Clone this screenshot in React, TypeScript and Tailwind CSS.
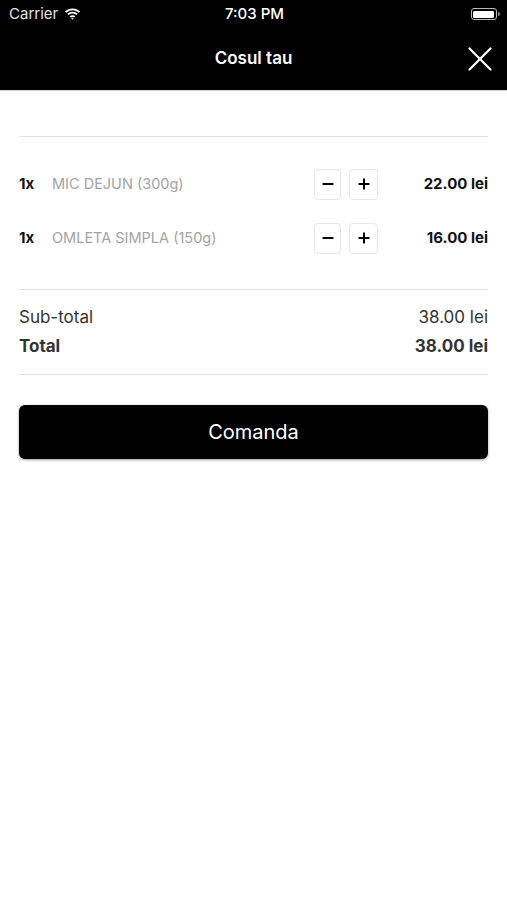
import { Minus, Plus } from "lucide-react"

const items = [
  { id: 1, qty: 1, name: "MIC DEJUN (300g)", price: "22.00 lei" },
  { id: 2, qty: 1, name: "OMLETA SIMPLA (150g)", price: "16.00 lei" },
]

const Wifi = () => (
  <svg width="17" height="12" viewBox="0 0 17 12" fill="white">
    <path d="M8.5 2.2c2.4 0 4.6.9 6.3 2.5l1.3-1.3C14.1 1.5 11.4.4 8.5.4S2.9 1.5.9 3.4l1.3 1.3C3.9 3.1 6.1 2.2 8.5 2.2z" />
    <path d="M8.5 5.6c1.5 0 2.9.6 3.9 1.5l1.3-1.3C12.3 4.5 10.5 3.8 8.5 3.8S4.7 4.5 3.3 5.8l1.3 1.3c1-.9 2.4-1.5 3.9-1.5z" />
    <path d="M8.5 9c.6 0 1.2.2 1.6.6l1.3-1.3C10.6 7.6 9.6 7.2 8.5 7.2s-2.1.4-2.9 1.1l1.3 1.3c.4-.4 1-.6 1.6-.6z" />
    <path d="M8.5 11.8l1.3-1.3c-.4-.3-.8-.5-1.3-.5s-.9.2-1.3.5z" />
  </svg>
)

const Close = () => (
  <svg width="24" height="24" viewBox="0 0 24 24" stroke="white" strokeWidth="2.2" strokeLinecap="round">
    <path d="M1.5 1.5l21 21M22.5 1.5l-21 21" />
  </svg>
)

export default function App() {
  return (
    <div className="min-h-screen bg-white font-['Inter','Liberation_Sans',sans-serif]">
      <header className="bg-black text-white h-[91px] border-b border-[#d0d0d0] flex flex-col">
        <div className="h-[28px] flex items-center justify-between pl-[9px] pr-[7px]">
          <div className="flex items-center gap-[6px] text-[15px] w-[120px] text-[#e5e5e5]">
            <span>Carrier</span>
            <Wifi />
          </div>
          <div className="text-[15px] font-medium">7:03 PM</div>
          <div className="w-[120px] flex justify-end items-center">
            <div className="w-[26px] h-[12px] rounded-[3px] border border-[#bbb] p-[1.5px]">
              <div className="w-full h-full bg-white rounded-[1.5px]" />
            </div>
            <div className="w-[2px] h-[4px] bg-[#888] rounded-r-sm ml-[1px]" />
          </div>
        </div>
        <div className="flex-1 flex items-center justify-center relative">
          <span className="text-[17px] font-semibold">Cosul tau</span>
          <div className="absolute right-[15px] top-[19px]">
            <Close />
          </div>
        </div>
      </header>

      <main className="px-[19px]">
        <div className="mt-[45px] border-t border-[#e2e2e2]" />
        <div className="pt-[31px] pb-[35px] flex flex-col gap-[22px]">
          {items.map((item) => (
            <div key={item.id} className="flex items-center h-[32px]">
              <span className="font-bold w-[33px] text-[15px] text-[#111]">{item.qty}x</span>
              <span className="flex-1 text-[14.5px] text-[#a3a3a3]">{item.name}</span>
              <button className="w-[27px] h-[31px] rounded-[4px] border border-[#e6e6e6] flex items-center justify-center">
                <Minus size={16} strokeWidth={3} />
              </button>
              <button className="ml-[8px] w-[29px] h-[31px] rounded-[4px] border border-[#e6e6e6] flex items-center justify-center">
                <Plus size={16} strokeWidth={3} />
              </button>
              <span className="w-[110px] text-right font-bold text-[15px] text-[#111]">{item.price}</span>
            </div>
          ))}
        </div>
        <div className="border-t border-[#e2e2e2]" />
        <div className="pt-[15px] pb-[15px] flex flex-col gap-[3px] text-[17px] text-[#333]">
          <div className="flex justify-between">
            <span>Sub-total</span>
            <span>38.00 lei</span>
          </div>
          <div className="flex justify-between font-bold">
            <span>Total</span>
            <span>38.00 lei</span>
          </div>
        </div>
        <div className="border-t border-[#e2e2e2]" />
        <button className="mt-[30px] w-full h-[54px] bg-black text-white text-[20px] rounded-[6px] shadow-[0_1px_3px_rgba(0,0,0,0.4)]">
          Comanda
        </button>
      </main>
    </div>
  )
}
